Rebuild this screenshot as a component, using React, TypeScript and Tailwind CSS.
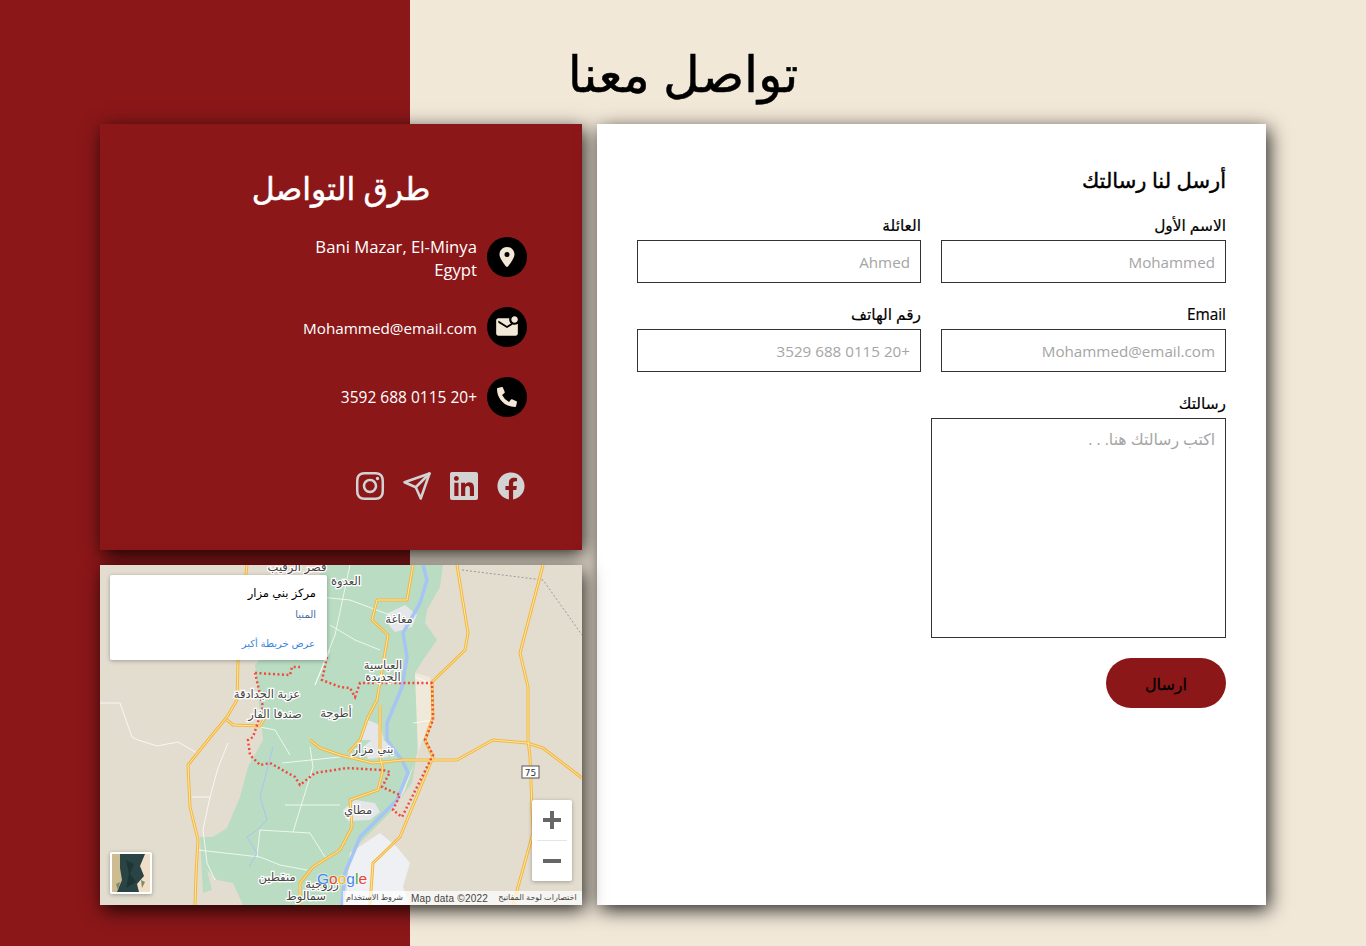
import { FaFacebook, FaLinkedin, FaPhoneAlt } from 'react-icons/fa';
import { FaLocationDot } from 'react-icons/fa6';
import { FiSend } from 'react-icons/fi';
import { AiOutlineInstagram } from 'react-icons/ai';
import { MdMarkEmailUnread } from 'react-icons/md';

const roads = [
  'M147 0 L140 60 L138 95 L137 135 L127 152 L108 175 L88 200 L90 242 L98 275 L96 310 L95 340',
  'M127 155 L133 160 L160 161 L168 148',
  'M313 0 L307 35 L277 35 L272 55 L288 70 L277 135 L268 152 L260 175 L248 188',
  'M357 0 L368 68 L365 85 L332 117 L333 152 L325 175 L333 192 L300 272 L273 298 L270 340',
  'M443 0 L420 88 L428 122 L428 175 L430 192 L433 268 L413 340',
  'M210 175 L220 183 L240 190 L273 198 L303 195 L357 195 L393 175 L427 178 L443 183 L482 213',
  'M280 140 L280 192 L283 205 L278 225 L250 235 L252 262 L240 285 L213 302 L200 318 L200 340',
];

const minorRoads = [
  'M0 138 L20 138 L32 172 L38 175 L57 181 L78 177 L97 188',
  'M92 232 L110 232 L118 203 L128 178',
  'M110 232 L103 265 L107 298 L115 315',
  'M98 285 L160 292 L180 300 L207 305',
  'M160 265 L193 267 L210 268 L225 292',
  'M160 265 L157 292',
  'M193 267 L213 202 L210 182',
  'M185 240 L240 240',
  'M182 198 L240 192',
  'M150 160 L175 165 L190 190',
  'M215 120 L230 85 M230 60 L255 75 L280 85',
  'M200 30 L250 35 L290 50',
  'M315 112 L330 118 M313 158 L333 155',
  'M250 0 L235 70 L215 120',
];

const labels: [string, number, number][] = [
  ['قصر الرقيب', 197, 6],
  ['العدوة', 246, 20],
  ['مغاغة', 299, 58],
  ['العباسية', 283, 104],
  ['الجديدة', 283, 116],
  ['عزبة الجدادقة', 167, 133],
  ['صندفا الفار', 175, 153],
  ['أطوجة', 236, 152],
  ['بني مزار', 273, 188],
  ['مطاي', 258, 249],
  ['منقطين', 177, 316],
  ['زروجية', 222, 323],
  ['سمالوط', 206, 335],
];

function MapDrawing() {
  return (
    <svg viewBox="0 0 482 340" className="block w-full h-full bg-[#e3ddd0]" style={{ fontFamily: '"DejaVu Sans", sans-serif' }}>
      <path
        d="M225 0 L343 0 L340 22 L327 45 L325 58 L337 75 L323 95 L315 108 L320 128 L330 150 L320 172 L317 188 L312 218 L290 248 L273 265 L250 288 L243 340 L143 340 L133 318 L117 315 L107 305 L112 325 L103 328 L100 272 L113 272 L127 263 L140 232 L148 202 L163 175 L155 100 L190 60 Z"
        fill="#b9dcc2"
      />
      <path d="M315 108 L330 112 L333 155 L322 176 L305 225 L292 248 L318 190 Z" fill="#efe9da" />
      <path d="M288 48 L305 40 L317 50 L312 62 L295 67 L287 58 Z" fill="#e4e6e8" />
      <path d="M263 182 L275 172 L290 178 L288 192 L268 194 Z" fill="#e4e6e8" />
      <path d="M262 168 L268 155 L280 160 L284 175 L262 175 Z" fill="#e4e6e8" />
      <path d="M243 245 L255 235 L275 238 L280 247 L270 255 L248 256 Z" fill="#e4e6e8" />
      <path d="M250 288 L280 268 L297 282 L310 298 L303 322 L310 340 L245 340 L247 322 Z" fill="#eef0f3" />
      {minorRoads.map((d) => (
        <path key={d} d={d} fill="none" stroke="#ffffff" strokeWidth="1" opacity="0.75" />
      ))}
      <path
        d="M173 182 L160 232 L167 255 L157 265 L147 272 L157 288 L149 302"
        fill="none"
        stroke="#a6c5f5"
        strokeWidth="1"
      />
      <path
        d="M323 0 L327 15 L320 38 L303 68 L307 92 L302 122 L287 158 L287 175 L303 197 L308 208 L297 235 L260 272 L245 308 L242 340"
        fill="none"
        stroke="#a6c5f5"
        strokeWidth="3.5"
      />
      <path d="M362 5 L443 15 L482 70" fill="none" stroke="#9a9a9a" strokeWidth="1" strokeDasharray="2 2" />
      {roads.map((d) => (
        <path key={d} d={d} fill="none" stroke="#f3b73f" strokeWidth="3" strokeLinejoin="round" />
      ))}
      {roads.map((d) => (
        <path key={`${d}-in`} d={d} fill="none" stroke="#fde7a8" strokeWidth="1" strokeLinejoin="round" />
      ))}
      <path
        d="M155 108 L190 110 L192 102 L200 102 M227 92 L222 115 L240 122 L250 123 L255 132 L260 118 L332 118 L333 155 L325 175 L333 190 L302 252 L293 245 L300 230 L282 222 L290 207 L283 205 L247 203 L215 208 L200 220 L195 212 L170 198 L160 200 L150 190 L148 175 L153 172 L163 142 L155 108"
        fill="none"
        stroke="#ee4b3e"
        strokeWidth="2.5"
        strokeDasharray="2 2.5"
      />
      <rect x="422" y="201" width="17" height="12" fill="#ffffff" stroke="#555555" />
      <text x="430.5" y="211" textAnchor="middle" fontSize="9" fill="#333333">75</text>
      {labels.map(([t, x, y]) => (
        <text
          key={t}
          x={x}
          y={y}
          textAnchor="middle"
          fontSize="11.5"
          fill="#444444"
          stroke="#ffffff"
          strokeWidth="2.5"
          paintOrder="stroke"
          direction="rtl"
        >
          {t}
        </text>
      ))}
    </svg>
  );
}

function Thumb() {
  return (
    <svg viewBox="0 0 38 38" className="block w-full h-full">
      <rect width="38" height="38" fill="#efdfc8" />
      <path d="M0 0 H9 L9 14 L11 26 L6 38 H0 Z" fill="#cdbb92" />
      <path d="M8 0 H33 L28 12 L32 22 L25 30 L27 38 H5 L10 26 L8 14 Z" fill="#2a4344" />
      <path d="M14 6 L22 10 L18 20 L24 28 L14 34 L17 20 Z" fill="#1f3535" />
      <path d="M4 30 L8 28 L6 36 Z M29 26 L33 28 L30 34 Z" fill="#7f8a66" />
    </svg>
  );
}

function MapCard() {
  return (
    <div className="relative h-[340px] shadow-[3px_5px_18px_rgba(0,0,0,0.85)]">
      <MapDrawing />
      <div dir="rtl" className="absolute left-[10px] top-[10px] w-[217px] h-[85px] bg-white rounded-[2px] shadow-[0_1px_4px_rgba(0,0,0,0.3)] pt-[10px] px-[11px] font-['Liberation_Sans','DejaVu_Sans',sans-serif]">
        <div className="text-[11.5px] leading-[16px] text-black">مركز بني مزار</div>
        <div className="text-[10px] leading-[14px] mt-[7px] text-[#4a6fa5]">المنيا</div>
        <div className="text-[10px] leading-[14px] mt-[15px] pr-px text-[#3a84df]">عرض خريطة أكبر</div>
      </div>
      <div className="absolute left-[432px] top-[235px] w-[40px] h-[81px] bg-white rounded-[2px] shadow-[0_1px_4px_rgba(0,0,0,0.3)] flex flex-col items-center px-[5px]">
        <div className="h-[40px] w-full flex items-center justify-center">
          <svg width="18" height="18" viewBox="0 0 18 18"><path d="M0 9h18M9 0v18" stroke="#666666" strokeWidth="4" /></svg>
        </div>
        <div className="h-px w-full bg-[#e6e6e6]" />
        <div className="h-[40px] w-full flex items-center justify-center">
          <svg width="18" height="18" viewBox="0 0 18 18"><path d="M0 9h18" stroke="#666666" strokeWidth="4" /></svg>
        </div>
      </div>
      <div className="absolute left-[10px] top-[287px] w-[42px] h-[42px] border-2 border-white rounded-[2px] shadow-[0_1px_4px_rgba(0,0,0,0.3)] overflow-hidden">
        <Thumb />
      </div>
      <div className="absolute left-[217px] top-[305px] text-[15.5px] leading-[18px] font-['Liberation_Sans',sans-serif] font-medium [text-shadow:0_0_2px_#fff,0_0_2px_#fff]">
        <span className="text-[#4285f4]">G</span>
        <span className="text-[#ea4335]">o</span>
        <span className="text-[#fbbc05]">o</span>
        <span className="text-[#4285f4]">g</span>
        <span className="text-[#34a853]">l</span>
        <span className="text-[#ea4335]">e</span>
      </div>
      <div className="absolute right-0 bottom-0 h-[14px] w-[239px] bg-white/70 flex items-center text-[8px] text-[#444444] font-['Liberation_Sans','DejaVu_Sans',sans-serif]">
        <div className="w-[63px] text-center" dir="rtl">شروط الاستخدام</div>
        <div className="w-[87px] text-center text-[10px] tracking-[0.2px]">Map data ©2022</div>
        <div className="flex-1 text-center" dir="rtl">اختصارات لوحة المفاتيح</div>
      </div>
    </div>
  );
}

function ContactRow({ icon, children }: { icon: React.ReactNode; children: React.ReactNode }) {
  return (
    <div className="h-10 flex items-center justify-end gap-[10px]">
      <div dir="rtl" className="text-right text-white pt-px">{children}</div>
      <div className="w-10 h-10 rounded-full bg-black text-[#f2e8d8] flex items-center justify-center shrink-0">{icon}</div>
    </div>
  );
}

function Field({ label, placeholder }: { label: string; placeholder: string }) {
  return (
    <div>
      <label className="block text-[15.4px] leading-6 text-black mb-[2px] [-webkit-text-stroke:0.2px_black]">{label}</label>
      <input
        dir="rtl"
        placeholder={placeholder}
        className="block w-full h-[43px] border border-[#333333] px-[10px] text-[15.2px] outline-none placeholder:text-[#a5a5a5]"
      />
    </div>
  );
}

export default function App() {
  return (
    <div
      dir="ltr"
      className="min-h-[946px] px-[100px] pb-[41px] bg-[linear-gradient(to_right,#8b1719_410px,#f2e8d8_410px)] font-['Open_Sans','DejaVu_Sans',sans-serif]"
    >
      <div className="h-[124px] flex items-center justify-center pt-[22px]">
        <h1 dir="rtl" className="text-[50.5px] leading-[72px] font-normal text-black [-webkit-text-stroke:0.5px_black]">تواصل معنا</h1>
      </div>

      <div className="flex gap-[15px]">
        <div className="w-[482px] flex flex-col gap-[15px]">
          <div className="h-[426px] bg-[#8b1719] pt-[40px] pr-[55px] shadow-[3px_5px_18px_rgba(0,0,0,0.85)]">
            <h2 dir="rtl" className="-mr-[55px] text-center text-[31.5px] leading-[48px] font-normal text-white [-webkit-text-stroke:0.5px_white]">طرق التواصل</h2>
            <div className="mt-[25px] flex flex-col gap-[30px]">
              <ContactRow icon={<FaLocationDot size={20} />}>
                <div className="text-[16.7px] leading-[23px]" dir="ltr">
                  Bani Mazar, El-Minya
                  <br />
                  Egypt
                </div>
              </ContactRow>
              <ContactRow icon={<MdMarkEmailUnread size={26} />}>
                <span className="text-[15.25px]">Mohammed@email.com</span>
              </ContactRow>
              <ContactRow icon={<FaPhoneAlt size={20} />}>
                <span className="text-[15.5px]">+20 0115 688 3592</span>
              </ContactRow>
            </div>
            <div className="mt-[55px] pr-[2px] flex items-center justify-end gap-[19px] text-[#d3d3d3]">
              <div className="w-7 h-7 flex items-center justify-center"><AiOutlineInstagram size={36} className="shrink-0" /></div>
              <div className="w-7 h-7 flex items-center justify-center"><FiSend size={30} className="shrink-0" /></div>
              <div className="w-7 h-7 flex items-center justify-center"><FaLinkedin size={32} className="shrink-0" /></div>
              <div className="w-7 h-7 flex items-center justify-center"><FaFacebook size={28} className="shrink-0" /></div>
            </div>
          </div>
          <MapCard />
        </div>

        <div dir="rtl" className="flex-1 h-[781px] bg-white px-[40px] pt-[38px] shadow-[3px_5px_18px_rgba(0,0,0,0.85)]">
          <h3 className="text-[21px] leading-9 font-normal text-black mb-4 [-webkit-text-stroke:0.4px_black]">أرسل لنا رسالتك</h3>
          <div className="grid grid-cols-[285px_284px] gap-x-5 gap-y-5">
            <Field label="الاسم الأول" placeholder="Mohammed" />
            <Field label="العائلة" placeholder="Ahmed" />
            <Field label="Email" placeholder="Mohammed@email.com" />
            <Field label="رقم الهاتف" placeholder="+20 0115 688 3529" />
          </div>
          <label className="block mt-5 mb-[2px] text-[15.4px] leading-6 text-black [-webkit-text-stroke:0.2px_black]">رسالتك</label>
          <textarea
            placeholder="اكتب رسالتك هنا. . ."
            className="block w-[295px] h-[220px] border border-[#333333] px-[10px] py-[9px] text-[15.7px] outline-none resize-none placeholder:text-[#a5a5a5]"
          />
          <button className="block mt-5 w-[120px] h-[50px] rounded-full bg-[#8b1719] text-black text-base pt-px [-webkit-text-stroke:0.3px_black]">ارسال</button>
        </div>
      </div>
    </div>
  );
}
